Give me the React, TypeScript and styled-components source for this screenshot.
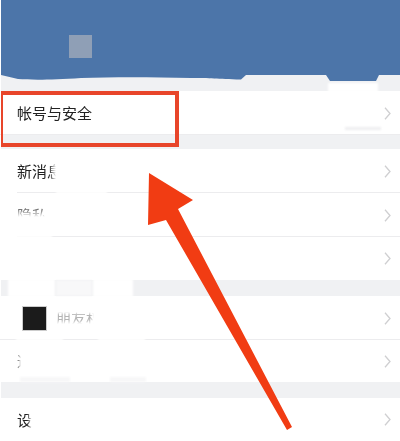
import React from "react";
import styled, { createGlobalStyle } from "styled-components";

const Global = createGlobalStyle`
  html, body { margin: 0; padding: 0; background: #fff; }
  body { font-family: "Noto Sans CJK SC", "Liberation Sans", sans-serif; }
`;

const Page = styled.div`
  position: relative;
  width: 400px;
  height: 441px;
  overflow: hidden;
  background: #fff;
`;

const Header = styled.header`
  position: relative;
  height: 75px;
  margin-left: 1px;
  background: #4c75a9;
`;

const Avatar = styled.div`
  position: absolute;
  left: 68px;
  top: 35px;
  width: 23px;
  height: 23px;
  background: #8f9fb6;
`;

const Wave = styled.svg`
  position: absolute;
  left: 0;
  top: 75px;
  width: 399px;
  height: 8px;
  display: block;
  filter: blur(0.5px);
`;

const Band = styled.div<{ $h: number }>`
  height: ${(p) => p.$h}px;
  margin-left: 1px;
  background: #f0f1f3;
`;

const Group = styled.section`
  display: flex;
  flex-direction: column;
  background: #fff;
`;

const Row = styled.div<{ $h: number; $line?: number }>`
  position: relative;
  box-sizing: border-box;
  height: ${(p) => p.$h}px;
  display: flex;
  align-items: center;
  padding: 0 9px 0 17px;
  &::after {
    content: "";
    display: ${(p) => (p.$line !== undefined ? "block" : "none")};
    position: absolute;
    left: ${(p) => p.$line ?? 0}px;
    right: 0;
    bottom: 0;
    height: 1px;
    background: #ececee;
  }
`;

const Label = styled.span<{ $tone?: string; $mask?: string }>`
  display: block;
  flex: none;
  font-size: 15px;
  line-height: 22px;
  white-space: nowrap;
  color: ${(p) => p.$tone || "#222"};
  filter: blur(0.35px);
  ${(p) =>
    p.$mask
      ? `-webkit-mask-image: ${p.$mask}; mask-image: ${p.$mask}; -webkit-mask-composite: source-in; mask-composite: intersect;`
      : ""}
`;

const Icon = styled.div`
  width: 23px;
  height: 23px;
  margin: 0 10px 0 6px;
  flex: none;
  background: #1b1b1b;
  box-shadow: 0 0 0 1px #ccc;
`;

const ChevronSvg = styled.svg`
  margin-left: auto;
  width: 7px;
  height: 13px;
  flex: none;
  fill: none;
  stroke: #cfcfd1;
  stroke-width: 1.3;
`;

const Patch = styled.div<{ $x: number; $y: number; $w: number; $h: number; $c?: string }>`
  position: absolute;
  left: ${(p) => p.$x}px;
  top: ${(p) => p.$y}px;
  width: ${(p) => p.$w}px;
  height: ${(p) => p.$h}px;
  background: ${(p) => p.$c || "#fff"};
  filter: blur(1px);
`;

const Highlight = styled.div`
  position: absolute;
  left: 1px;
  top: 91px;
  width: 178px;
  height: 56px;
  box-sizing: border-box;
  border-style: solid;
  border-color: #e8452a;
  border-width: 4px 4px 4px 2px;
`;

const Arrow = styled.svg`
  position: absolute;
  left: 0;
  top: 0;
  width: 400px;
  height: 441px;
  pointer-events: none;
`;

const Chevron = () => (
  <ChevronSvg viewBox="0 0 7 13">
    <path d="M1 .8l5 5.7-5 5.7" />
  </ChevronSvg>
);

const fadeX = (from: number, to: number) =>
  `linear-gradient(90deg,#000 ${from}px,transparent ${to}px)`;
const fadeY = (from: number, to: number) =>
  `linear-gradient(180deg,#000 ${from}px,transparent ${to}px)`;
const speckle = `linear-gradient(180deg,transparent 5px,#000 8px,#000 13px,transparent 17px),${fadeX(34, 38)}`;

export default function App() {
  return (
    <Page>
      <Global />
      <Header>
        <Avatar />
        <Wave viewBox="0 0 399 8" preserveAspectRatio="none">
          <path
            d="M0 0H399V0H378L375 6H329L325 0H245L240 4.5C215 4 210 3 190 3 150 2 110 2 80 3 50 5 30 5 17 4L0 0Z"
            fill="#4c75a9"
          />
        </Wave>
      </Header>
      <Band $h={16} />
      <Group>
        <Row $h={44} $line={0}>
          <Label>帐号与安全</Label>
          <Chevron />
        </Row>
      </Group>
      <Band $h={14} />
      <Group>
        <Row $h={44} $line={17}>
          <Label $mask={fadeX(32, 39)}>新消息通知</Label>
          <Chevron />
        </Row>
        <Row $h={44} $line={17}>
          <Label $tone="#777" $mask={fadeY(6, 13)}>隐私</Label>
          <Chevron />
        </Row>
        <Row $h={43}>
          <Chevron />
        </Row>
      </Group>
      <Band $h={16} />
      <Group>
        <Row $h={44} $line={0}>
          <Icon />
          <Label $tone="#b4b4b4" $mask={speckle}>朋友权限</Label>
          <Chevron />
        </Row>
        <Row $h={42}>
          <Label $tone="#777" $mask={fadeX(1, 4)}>通用</Label>
          <Chevron />
        </Row>
      </Group>
      <Band $h={16} />
      <Group>
        <Row $h={43}>
          <Label $mask={fadeX(10, 15)}>设置</Label>
          <Chevron />
        </Row>
      </Group>

      <Patch $x={328} $y={83} $w={50} $h={9} />
      <Patch $x={345} $y={127} $w={36} $h={3} $c="#eeeef0" />
      <Patch $x={56} $y={191} $w={51} $h={3} />
      <Patch $x={0} $y={235} $w={52} $h={3} />
      <Patch $x={8} $y={279} $w={47} $h={18} />
      <Patch $x={56} $y={280} $w={36} $h={16} $c="#f8f8f9" />
      <Patch $x={93} $y={279} $w={40} $h={18} />
      <Patch $x={16} $y={338} $w={47} $h={3} />
      <Patch $x={98} $y={338} $w={47} $h={3} />
      <Patch $x={20} $y={377} $w={50} $h={5} $c="#f7f7f8" />
      <Patch $x={110} $y={377} $w={36} $h={5} $c="#f7f7f8" />

      <Highlight />
      <Arrow viewBox="0 0 400 441">
        <path
          d="M149 173L193 200L178 209L292 427L287 430L166 220L148 225Z"
          fill="#f13c13"
        />
      </Arrow>
    </Page>
  );
}
